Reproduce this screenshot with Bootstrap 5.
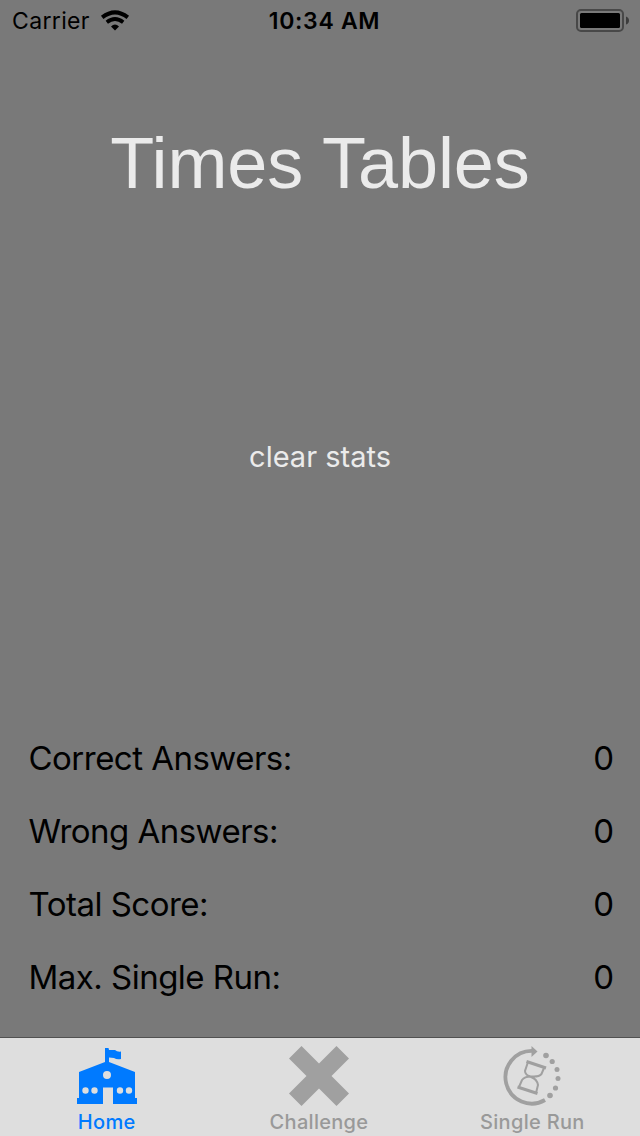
<!DOCTYPE html>
<html lang="en">
<head>
<meta charset="utf-8">
<meta name="viewport" content="width=device-width, initial-scale=1">
<title>Times Tables</title>
<link href="https://cdn.jsdelivr.net/npm/bootstrap@5.3.0/dist/css/bootstrap.min.css" rel="stylesheet">
<style>
body{font-family:Inter,"Liberation Sans",sans-serif;background:#797979;color:#000;height:1136px;overflow:hidden}
.status{height:40px;font-size:23px;line-height:42px}
.carrier{letter-spacing:.35px}
.clock{font-weight:600;font-size:23px;letter-spacing:.7px;padding-left:5px}
.title{font-family:"Liberation Sans",sans-serif;font-size:72px;line-height:80px;margin-top:83px;color:#ebebeb;font-weight:400;letter-spacing:-.05px}
.clear{font-size:29px;line-height:40px;color:#ebebeb;margin-top:234px}
.stats{padding:0 26px 0 28.5px;margin-bottom:23px}
.stat{height:73px;font-size:33px;line-height:73px}
.stat span:first-child{letter-spacing:-.52px}
.tabs{height:99px;background:#dedede;border-top:1px solid #515151}
.tab{color:#999;font-size:20px;font-weight:500;line-height:24px;padding-top:8px;letter-spacing:.3px}
.tab.active{color:#007aff}
.tab svg{display:block;margin-bottom:4px}
.shift{padding-right:2px}
</style>
</head>
<body class="d-flex flex-column">
<header class="status row g-0 px-2 flex-shrink-0">
  <div class="col d-flex align-items-center ps-1"><span class="carrier">Carrier</span>
    <svg class="ms-2" width="34" height="24" viewBox="98 9 34 24" fill="none" stroke="#000"><path d="M102.2 17.4Q115 7.3 127.8 17.4" stroke-width="4"/><path d="M106.8 22.3Q115 15.7 123.2 22.3" stroke-width="3.7"/><path d="M111 26.6Q115 22.3 119 26.6L115 30.5Z" fill="#000" stroke="none"/></svg>
  </div>
  <div class="col text-center clock">10:34 AM</div>
  <div class="col d-flex justify-content-end align-items-center">
    <svg width="56" height="26" viewBox="576 8 56 26"><rect x="577" y="10" width="46" height="21" rx="4" fill="none" stroke="#484848" stroke-width="2"/><rect x="580" y="13" width="40" height="15" rx="1.5"/><path d="M626 16.5Q629 17.5 629 20.5T626 24.5Z" fill="#3c3c3c"/></svg>
  </div>
</header>
<main class="flex-grow-1 d-flex flex-column">
  <h1 class="title text-center mb-0"><span>Times Tables</span></h1>
  <div class="text-center clear"><span>clear stats</span></div>
  <section class="stats mt-auto">
    <div class="stat d-flex justify-content-between"><span>Correct Answers:</span><span>0</span></div>
    <div class="stat d-flex justify-content-between"><span>Wrong Answers:</span><span>0</span></div>
    <div class="stat d-flex justify-content-between"><span>Total Score:</span><span>0</span></div>
    <div class="stat d-flex justify-content-between"><span>Max. Single Run:</span><span>0</span></div>
  </section>
</main>
<nav class="tabs row g-0 flex-shrink-0">
  <div class="col-4 tab active d-flex flex-column align-items-center">
    <svg width="60" height="60" viewBox="0 0 60 60"><path fill="currentColor" fill-rule="evenodd" d="M28 2H31.5L32 4L38 4Q40 6 44 5.6V13Q40 14 37 12L32 11.5V16L58 26V52H60V58H36V41.5H26V58H0V52H2V26L28 16ZM30 25a4 4 0 1 0 0 8a4 4 0 1 0 0-8ZM8.5 41.3a3.2 3.2 0 1 0 0 6.4a3.2 3.2 0 1 0 0-6.4ZM17.5 41.3a3.2 3.2 0 1 0 0 6.4a3.2 3.2 0 1 0 0-6.4ZM43 41.3a3.2 3.2 0 1 0 0 6.4a3.2 3.2 0 1 0 0-6.4ZM52 41.3a3.2 3.2 0 1 0 0 6.4a3.2 3.2 0 1 0 0-6.4Z"/></svg>
    <span>Home</span>
  </div>
  <div class="col-4 tab shift d-flex flex-column align-items-center">
    <svg width="60" height="60" viewBox="0 0 60 60"><path fill="#a0a0a0" d="M12.5 0L30 17.5L47.5 0L60 12.5L42.5 30L60 47.5L47.5 60L30 42.5L12.5 60L0 47.5L17.5 30L0 12.5Z"/></svg>
    <span>Challenge</span>
  </div>
  <div class="col-4 tab shift d-flex flex-column align-items-center">
    <svg width="60" height="60" viewBox="1 0 60 60" fill="none" stroke="#a0a0a0"><path d="M32 5A26.3 26.3 0 1 0 44 54" stroke-width="3.8"/><path d="M30.5 0V11L36.5 5.5Z" fill="#a0a0a0" stroke="none"/><g fill="#a0a0a0" stroke="none"><circle cx="45" cy="9.5" r="2.8"/><circle cx="51.2" cy="15.5" r="2.6"/><circle cx="56" cy="23.5" r="2.5"/><circle cx="57" cy="32.5" r="2.5"/><circle cx="54.5" cy="42" r="2.6"/><circle cx="49" cy="49.5" r="2.8"/></g><g stroke-width="2"><path d="M25.5 15.5L45 22" stroke-width="3"/><path d="M16.5 41L36.5 47.5" stroke-width="3"/><path d="M27 16L24 25Q24 29 30 31T37 39L35 47M43 22L40.5 28Q38 31 31 30.5T21 34L18 41"/></g></svg>
    <span>Single Run</span>
  </div>
</nav>
<script src="https://cdn.jsdelivr.net/npm/bootstrap@5.3.0/dist/js/bootstrap.bundle.min.js"></script>
</body>
</html>
